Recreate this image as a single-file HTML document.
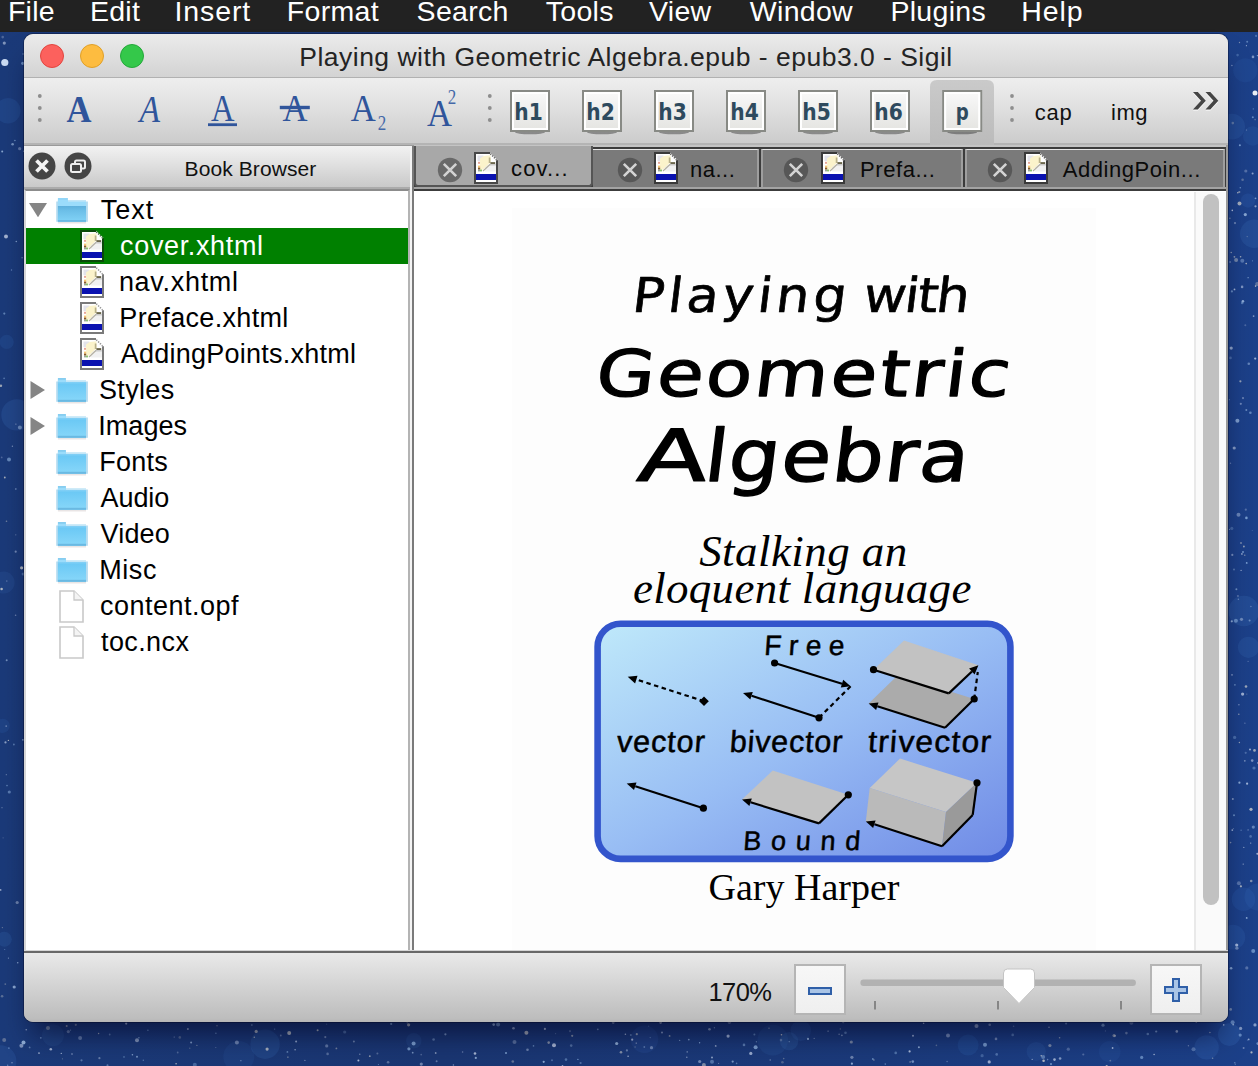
<!DOCTYPE html>
<html lang="en">
<head>
<meta charset="utf-8">
<title>Playing with Geometric Algebra.epub - epub3.0 - Sigil</title>
<style>
*{box-sizing:border-box;margin:0;padding:0}
html,body{width:1258px;height:1066px;overflow:hidden}
body{position:relative;background:#1a3a7c;font-family:"Liberation Sans",sans-serif;color:#000}
.abs{position:absolute}
#desk{position:absolute;left:0;top:0;width:1258px;height:1066px;background:linear-gradient(90deg,#1b3a79 0%,#1a3672 35%,#1b3a7b 70%,#1c4089 100%)}
#menubar{position:absolute;left:0;top:0;width:1258px;height:32px;background:#222222;color:#fff;font-size:28.5px;letter-spacing:.3px;line-height:32px;white-space:nowrap;overflow:hidden}
#menubar span{position:absolute;top:-5.5px;line-height:32px}
#win{position:absolute;left:24px;top:34px;width:1204px;height:988px;border-radius:9px 9px 9px 9px;background:#9a9a9a;overflow:hidden;box-shadow:0 0 0 1px rgba(0,0,20,.3),0 20px 28px -8px rgba(0,0,30,.6)}
#titlebar{position:absolute;left:0;top:0;width:1204px;height:44px;background:linear-gradient(#ebebeb,#d3d3d3);border-bottom:1px solid #b1b1b1}
#titlebar .t{position:absolute;left:0;width:1204px;top:7px;text-align:center;font-size:26.5px;letter-spacing:.49px;line-height:32px;color:#242424;white-space:nowrap}
.tl{position:absolute;top:10px;width:24px;height:24px;border-radius:12px}
#toolbar{position:absolute;left:0;top:44px;width:1204px;height:67px;background:linear-gradient(#eeeeee,#e2e2e2 40%,#cccccc);border-bottom:2px solid #b4b4b4}
.dot{position:absolute;width:4px;height:4px;border-radius:2px;background:#8c8c8c}
.ai{position:absolute;font-family:"Liberation Serif",serif;color:#2f549a;line-height:1;white-space:nowrap}
.hb{position:absolute;top:12px;width:40px;height:42px;border:2px solid #888a85;background:linear-gradient(#f8f8f8,#e6e6e3);box-shadow:inset 0 0 0 2px #fff,0 2px 2px -1px rgba(0,0,0,.55)}
.hb b{position:absolute;left:0;top:7px;width:36px;text-align:center;font-family:"DejaVu Sans","Liberation Sans",sans-serif;font-weight:bold;font-size:23px;line-height:24px;color:#2e4a5e;transform:scaleX(.86);letter-spacing:1px}

#bbhead{position:absolute;left:0;top:112px;width:386px;height:43px;background:linear-gradient(#f2f2f2,#e0e0e0 45%,#c9c9c9);border-bottom:2px solid #ababab}
#bbhead .t{position:absolute;left:0;top:7.5px;width:100%;padding-left:67px;text-align:center;font-size:21px;line-height:30px;letter-spacing:.1px;color:#111}
#tree{position:absolute;left:0;top:155px;width:386px;height:761px;background:#fff;border-left:2px solid #d6d6d6;border-right:2px solid #b4b4b4;border-top:2px solid #8c8c8c;font-size:27px;letter-spacing:.3px}
.row{position:absolute;left:0;width:382px;height:36px;line-height:36px;white-space:nowrap}
.row.sel{background:#008000;color:#fff}
.row span{position:absolute;top:0}
.row svg{position:absolute}
#split{position:absolute;left:386px;top:112px;width:4px;height:806px;background:linear-gradient(90deg,#f4f4f4 0,#f4f4f4 2px,#7a7a7a 2px)}
#tabbar{position:absolute;left:390px;top:111px;width:812px;height:47px;background:linear-gradient(#c4c4c4 0,#c4c4c4 2px,#3c3c3c 2px,#3c3c3c 46.5px,#fff 46.5px);font-size:22px;overflow:hidden}
.tab{position:absolute;top:3.7px;height:38.3px;background:#7a7a7a;border:2px solid #9e9e9e;border-top:1.5px solid #e6e6e6;border-bottom:0}
.tab.act{top:1px;height:41px;background:#a8a8a8;border:2px solid #555;border-top:0;border-radius:0 0 4px 4px}
#tabbar span{position:absolute;line-height:30px;color:#0a0a0a;white-space:nowrap}
#tabbar svg{position:absolute}
#content{position:absolute;left:390px;top:158px;width:812px;height:758px;background:#fff;overflow:hidden}
#cover{position:absolute;left:98px;top:16px;width:584px;height:742px;background:#fdfdfd}
#vsb{position:absolute;left:780px;top:0;width:32px;height:758px;background:#fafafa;border-left:2px solid #e9e9e9}
#vsb i{position:absolute;left:7px;top:2px;width:16px;height:711px;border-radius:8px;background:#c1c1c1}
#status{position:absolute;left:0;top:917px;width:1204px;height:71px;background:linear-gradient(#e9e9e9,#e0e0e0 20%,#bdbdbd 95%,#b6b6b6);border-top:2px solid #686868;box-shadow:0 -1px 0 #d6d6d6}
#status .z{position:absolute;left:684.5px;top:24px;font-size:25.5px;letter-spacing:-.6px;line-height:30px;color:#111}
.zb{position:absolute;top:11px;width:52px;height:51px;border:2px solid #b5b5b5;background:linear-gradient(#f7f7f7,#efefef)}
</style>
</head>
<body>
<div id="desk"><svg class="abs" style="left:0;top:0" width="1258" height="1066" viewBox="0 0 1258 1066"><circle cx="1243.8" cy="611.0" r="15.3" fill="#4a86d0" opacity="0.16"/><circle cx="1254.2" cy="233.7" r="14.2" fill="#4a86d0" opacity="0.16"/><circle cx="1252.6" cy="136.0" r="9.7" fill="#4a86d0" opacity="0.11"/><circle cx="1248.5" cy="647.3" r="10.6" fill="#4a86d0" opacity="0.15"/><circle cx="1248.0" cy="200.6" r="7.1" fill="#3f78c8" opacity="0.16"/><circle cx="1232.9" cy="937.2" r="12.4" fill="#3a6ec0" opacity="0.19"/><circle cx="1243.5" cy="899.3" r="11.7" fill="#3a6ec0" opacity="0.18"/><circle cx="1232.1" cy="126.7" r="12.9" fill="#4a86d0" opacity="0.15"/><circle cx="1257.9" cy="897.0" r="13.4" fill="#3f78c8" opacity="0.14"/><circle cx="1245.3" cy="70.3" r="12.1" fill="#3f78c8" opacity="0.11"/><circle cx="16.9" cy="414.9" r="15.6" fill="#3f78c8" opacity="0.20"/><circle cx="4.3" cy="939.2" r="7.5" fill="#4a86d0" opacity="0.15"/><circle cx="7.9" cy="110.8" r="12.7" fill="#3a6ec0" opacity="0.19"/><circle cx="6.7" cy="341.9" r="7.1" fill="#3f78c8" opacity="0.15"/><circle cx="2.7" cy="725.8" r="7.1" fill="#3a6ec0" opacity="0.16"/><circle cx="3.6" cy="582.5" r="11.0" fill="#4a86d0" opacity="0.12"/><circle cx="968.1" cy="1045.1" r="10.5" fill="#3f78c8" opacity="0.15"/><circle cx="0.6" cy="1061.1" r="15.8" fill="#3f78c8" opacity="0.17"/><circle cx="265.1" cy="1044.2" r="14.7" fill="#3f78c8" opacity="0.18"/><circle cx="53.0" cy="1035.3" r="11.0" fill="#4a86d0" opacity="0.10"/><circle cx="413.8" cy="1040.7" r="7.7" fill="#4a86d0" opacity="0.11"/><circle cx="800.8" cy="1030.6" r="10.3" fill="#3f78c8" opacity="0.17"/><circle cx="1206.6" cy="1047.4" r="12.2" fill="#3f78c8" opacity="0.20"/><circle cx="789.1" cy="1041.2" r="9.1" fill="#4a86d0" opacity="0.17"/><circle cx="238.8" cy="1056.6" r="15.5" fill="#3a6ec0" opacity="0.12"/><circle cx="1109.8" cy="1051.7" r="10.8" fill="#3f78c8" opacity="0.11"/><circle cx="644.5" cy="1039.2" r="13.7" fill="#3a6ec0" opacity="0.15"/><circle cx="1036.2" cy="1051.5" r="9.6" fill="#4a86d0" opacity="0.12"/><circle cx="1229.3" cy="1034.6" r="11.3" fill="#4a86d0" opacity="0.18"/><circle cx="772.8" cy="1040.1" r="15.3" fill="#3f78c8" opacity="0.12"/><circle cx="1.7" cy="457.4" r="0.9" fill="#cfdcf4" opacity="0.28"/><circle cx="6.8" cy="581.1" r="0.8" fill="#cfdcf4" opacity="0.30"/><circle cx="21.4" cy="1045.8" r="2.0" fill="#cfdcf4" opacity="0.54"/><circle cx="14.2" cy="987.0" r="1.6" fill="#b8d4f4" opacity="0.71"/><circle cx="23.1" cy="54.0" r="0.7" fill="#b8d4f4" opacity="0.49"/><circle cx="7.7" cy="1065.3" r="0.7" fill="#b8d4f4" opacity="0.48"/><circle cx="17.7" cy="962.8" r="0.8" fill="#b8d4f4" opacity="0.65"/><circle cx="8.4" cy="740.4" r="0.7" fill="#e8e4d8" opacity="0.69"/><circle cx="22.7" cy="63.3" r="1.6" fill="#9fc4ee" opacity="0.54"/><circle cx="15.9" cy="424.1" r="0.6" fill="#dfe8f8" opacity="0.55"/><circle cx="2.2" cy="151.5" r="1.0" fill="#b8d4f4" opacity="0.69"/><circle cx="9.3" cy="792.0" r="1.6" fill="#9fc4ee" opacity="0.47"/><circle cx="2.0" cy="807.7" r="0.6" fill="#dfe8f8" opacity="0.41"/><circle cx="11.5" cy="270.0" r="0.7" fill="#9fc4ee" opacity="0.50"/><circle cx="15.8" cy="534.8" r="0.6" fill="#cfdcf4" opacity="0.43"/><circle cx="16.3" cy="241.5" r="0.8" fill="#b8d4f4" opacity="0.63"/><circle cx="15.8" cy="489.0" r="0.9" fill="#b8d4f4" opacity="0.41"/><circle cx="4.8" cy="477.5" r="0.9" fill="#e8e4d8" opacity="0.69"/><circle cx="5.3" cy="984.1" r="0.9" fill="#e8e4d8" opacity="0.32"/><circle cx="8.4" cy="958.1" r="0.6" fill="#b8d4f4" opacity="0.61"/><circle cx="19.7" cy="148.7" r="1.6" fill="#cfdcf4" opacity="0.39"/><circle cx="19.9" cy="427.6" r="2.0" fill="#b8d4f4" opacity="0.50"/><circle cx="17.2" cy="902.5" r="1.6" fill="#dfe8f8" opacity="0.41"/><circle cx="6.7" cy="660.2" r="1.0" fill="#b8d4f4" opacity="0.54"/><circle cx="15.6" cy="615.2" r="0.8" fill="#cfdcf4" opacity="0.45"/><circle cx="0.6" cy="889.9" r="0.9" fill="#dfe8f8" opacity="0.64"/><circle cx="23.6" cy="151.2" r="0.7" fill="#b8d4f4" opacity="0.56"/><circle cx="23.0" cy="739.8" r="0.9" fill="#b8d4f4" opacity="0.66"/><circle cx="4.3" cy="43.1" r="1.6" fill="#dfe8f8" opacity="0.52"/><circle cx="4.3" cy="313.6" r="1.1" fill="#9fc4ee" opacity="0.52"/><circle cx="12.0" cy="1062.7" r="0.8" fill="#cfdcf4" opacity="0.45"/><circle cx="2.1" cy="996.3" r="1.3" fill="#e8e4d8" opacity="0.31"/><circle cx="4.7" cy="949.5" r="0.6" fill="#9fc4ee" opacity="0.44"/><circle cx="15.7" cy="551.7" r="1.1" fill="#cfdcf4" opacity="0.48"/><circle cx="2.4" cy="927.6" r="0.7" fill="#e8e4d8" opacity="0.36"/><circle cx="23.5" cy="1042.6" r="2.0" fill="#b8d4f4" opacity="0.74"/><circle cx="6.3" cy="774.7" r="0.6" fill="#dfe8f8" opacity="0.42"/><circle cx="0.9" cy="385.7" r="1.3" fill="#e8e4d8" opacity="0.63"/><circle cx="22.1" cy="257.7" r="0.7" fill="#dfe8f8" opacity="0.46"/><circle cx="4.1" cy="378.4" r="0.8" fill="#9fc4ee" opacity="0.49"/><circle cx="21.6" cy="567.8" r="1.6" fill="#e8e4d8" opacity="0.72"/><circle cx="13.9" cy="744.5" r="0.9" fill="#9fc4ee" opacity="0.47"/><circle cx="7.0" cy="785.6" r="0.8" fill="#9fc4ee" opacity="0.51"/><circle cx="6.2" cy="726.1" r="0.9" fill="#cfdcf4" opacity="0.40"/><circle cx="23.2" cy="574.0" r="1.6" fill="#9fc4ee" opacity="0.35"/><circle cx="2.7" cy="37.1" r="1.3" fill="#dfe8f8" opacity="0.26"/><circle cx="12.4" cy="446.2" r="0.7" fill="#cfdcf4" opacity="0.50"/><circle cx="1.6" cy="589.0" r="1.3" fill="#e8e4d8" opacity="0.71"/><circle cx="6.5" cy="521.2" r="0.8" fill="#e8e4d8" opacity="0.42"/><circle cx="12.6" cy="144.3" r="1.3" fill="#b8d4f4" opacity="0.56"/><circle cx="3.1" cy="837.8" r="0.6" fill="#cfdcf4" opacity="0.27"/><circle cx="5.5" cy="742.4" r="1.1" fill="#cfdcf4" opacity="0.61"/><circle cx="14.9" cy="140.5" r="0.7" fill="#9fc4ee" opacity="0.68"/><circle cx="6.0" cy="236.5" r="2.0" fill="#dfe8f8" opacity="0.69"/><circle cx="9.0" cy="459.5" r="2.0" fill="#9fc4ee" opacity="0.56"/><circle cx="1234.9" cy="684.8" r="0.9" fill="#9fc4ee" opacity="0.51"/><circle cx="1246.7" cy="917.9" r="0.9" fill="#b8d4f4" opacity="0.71"/><circle cx="1255.2" cy="358.6" r="1.1" fill="#cfdcf4" opacity="0.70"/><circle cx="1235.3" cy="1064.3" r="0.7" fill="#cfdcf4" opacity="0.32"/><circle cx="1232.8" cy="123.1" r="1.3" fill="#e8e4d8" opacity="0.30"/><circle cx="1244.8" cy="760.8" r="0.9" fill="#dfe8f8" opacity="0.45"/><circle cx="1231.8" cy="621.3" r="1.1" fill="#b8d4f4" opacity="0.71"/><circle cx="1232.3" cy="554.9" r="1.1" fill="#cfdcf4" opacity="0.50"/><circle cx="1252.3" cy="530.5" r="0.6" fill="#9fc4ee" opacity="0.27"/><circle cx="1246.8" cy="967.9" r="1.6" fill="#cfdcf4" opacity="0.32"/><circle cx="1232.3" cy="210.4" r="0.8" fill="#dfe8f8" opacity="0.75"/><circle cx="1245.8" cy="171.0" r="1.6" fill="#dfe8f8" opacity="0.29"/><circle cx="1238.5" cy="514.8" r="2.0" fill="#cfdcf4" opacity="0.43"/><circle cx="1246.4" cy="45.7" r="0.6" fill="#cfdcf4" opacity="0.67"/><circle cx="1240.8" cy="403.8" r="1.1" fill="#cfdcf4" opacity="0.45"/><circle cx="1246.5" cy="130.0" r="0.6" fill="#dfe8f8" opacity="0.41"/><circle cx="1252.2" cy="760.6" r="1.3" fill="#cfdcf4" opacity="0.53"/><circle cx="1243.6" cy="1048.1" r="1.0" fill="#dfe8f8" opacity="0.39"/><circle cx="1250.6" cy="836.4" r="1.3" fill="#b8d4f4" opacity="0.32"/><circle cx="1254.5" cy="750.4" r="1.3" fill="#e8e4d8" opacity="0.63"/><circle cx="1235.0" cy="223.1" r="1.1" fill="#dfe8f8" opacity="0.40"/><circle cx="1229.3" cy="399.7" r="0.6" fill="#b8d4f4" opacity="0.37"/><circle cx="1238.8" cy="714.2" r="0.8" fill="#e8e4d8" opacity="0.52"/><circle cx="1243.9" cy="546.5" r="0.9" fill="#e8e4d8" opacity="0.60"/><circle cx="1257.4" cy="55.6" r="0.7" fill="#b8d4f4" opacity="0.62"/><circle cx="1241.9" cy="553.9" r="0.9" fill="#dfe8f8" opacity="0.57"/><circle cx="1231.9" cy="291.4" r="1.1" fill="#9fc4ee" opacity="0.53"/><circle cx="1241.1" cy="570.4" r="0.7" fill="#dfe8f8" opacity="0.57"/><circle cx="1244.9" cy="723.2" r="0.6" fill="#cfdcf4" opacity="0.44"/><circle cx="1240.2" cy="1035.1" r="1.6" fill="#9fc4ee" opacity="0.52"/><circle cx="1230.7" cy="1009.4" r="1.3" fill="#e8e4d8" opacity="0.39"/><circle cx="1246.3" cy="410.0" r="1.0" fill="#b8d4f4" opacity="0.49"/><circle cx="1245.3" cy="325.2" r="1.0" fill="#cfdcf4" opacity="0.26"/><circle cx="1246.0" cy="686.5" r="1.3" fill="#e8e4d8" opacity="0.63"/><circle cx="1230.5" cy="357.9" r="1.3" fill="#b8d4f4" opacity="0.28"/><circle cx="1231.1" cy="968.3" r="1.3" fill="#b8d4f4" opacity="0.61"/><circle cx="1257.2" cy="284.0" r="2.0" fill="#e8e4d8" opacity="0.30"/><circle cx="1233.2" cy="1024.6" r="0.9" fill="#dfe8f8" opacity="0.55"/><circle cx="1230.5" cy="463.3" r="0.7" fill="#dfe8f8" opacity="0.35"/><circle cx="1239.3" cy="192.0" r="1.1" fill="#e8e4d8" opacity="0.47"/><circle cx="1242.2" cy="303.0" r="1.3" fill="#9fc4ee" opacity="0.43"/><circle cx="1252.6" cy="173.6" r="1.0" fill="#cfdcf4" opacity="0.62"/><circle cx="1243.0" cy="552.0" r="1.0" fill="#9fc4ee" opacity="0.64"/><circle cx="1253.6" cy="316.1" r="0.9" fill="#cfdcf4" opacity="0.57"/><circle cx="1234.5" cy="289.4" r="0.9" fill="#dfe8f8" opacity="0.69"/><circle cx="1247.2" cy="41.8" r="1.0" fill="#9fc4ee" opacity="0.46"/><circle cx="1230.1" cy="262.1" r="1.0" fill="#dfe8f8" opacity="0.29"/><circle cx="1255.5" cy="198.3" r="0.9" fill="#b8d4f4" opacity="0.57"/><circle cx="1243.0" cy="398.1" r="1.1" fill="#cfdcf4" opacity="0.42"/><circle cx="1253.3" cy="108.9" r="0.7" fill="#9fc4ee" opacity="0.47"/><circle cx="1253.3" cy="827.1" r="1.6" fill="#b8d4f4" opacity="0.46"/><circle cx="1240.3" cy="187.8" r="0.8" fill="#9fc4ee" opacity="0.58"/><circle cx="1238.4" cy="599.3" r="0.8" fill="#b8d4f4" opacity="0.46"/><circle cx="1245.8" cy="509.7" r="1.1" fill="#dfe8f8" opacity="0.29"/><circle cx="1241.5" cy="619.3" r="1.6" fill="#dfe8f8" opacity="0.40"/><circle cx="1231.2" cy="252.5" r="0.7" fill="#e8e4d8" opacity="0.60"/><circle cx="1250.0" cy="749.6" r="1.0" fill="#cfdcf4" opacity="0.69"/><circle cx="1239.4" cy="782.7" r="1.1" fill="#b8d4f4" opacity="0.70"/><circle cx="1249.6" cy="620.6" r="1.0" fill="#b8d4f4" opacity="0.47"/><circle cx="1242.3" cy="260.7" r="2.0" fill="#b8d4f4" opacity="0.37"/><circle cx="1253.0" cy="56.9" r="1.3" fill="#cfdcf4" opacity="0.54"/><circle cx="1250.4" cy="412.8" r="1.3" fill="#9fc4ee" opacity="0.52"/><circle cx="1245.3" cy="214.6" r="1.6" fill="#b8d4f4" opacity="0.69"/><circle cx="1252.5" cy="260.8" r="0.6" fill="#9fc4ee" opacity="0.52"/><circle cx="1237.6" cy="55.1" r="1.3" fill="#9fc4ee" opacity="0.28"/><circle cx="1237.9" cy="596.0" r="1.1" fill="#dfe8f8" opacity="0.29"/><circle cx="1255.1" cy="119.6" r="0.8" fill="#e8e4d8" opacity="0.30"/><circle cx="1236.1" cy="259.9" r="2.0" fill="#e8e4d8" opacity="0.42"/><circle cx="1240.4" cy="381.3" r="1.1" fill="#e8e4d8" opacity="0.59"/><circle cx="1243.2" cy="864.1" r="0.7" fill="#dfe8f8" opacity="0.60"/><circle cx="1240.9" cy="886.3" r="1.1" fill="#e8e4d8" opacity="0.68"/><circle cx="1253.2" cy="950.9" r="2.0" fill="#9fc4ee" opacity="0.57"/><circle cx="1239.5" cy="42.5" r="0.7" fill="#e8e4d8" opacity="0.46"/><circle cx="1255.6" cy="286.1" r="0.8" fill="#e8e4d8" opacity="0.75"/><circle cx="1248.8" cy="363.8" r="1.3" fill="#b8d4f4" opacity="0.46"/><circle cx="1236.9" cy="948.2" r="1.6" fill="#dfe8f8" opacity="0.40"/><circle cx="1237.8" cy="192.8" r="0.8" fill="#e8e4d8" opacity="0.71"/><circle cx="1229.5" cy="529.4" r="0.6" fill="#cfdcf4" opacity="0.41"/><circle cx="1234.4" cy="256.8" r="0.9" fill="#e8e4d8" opacity="0.55"/><circle cx="1246.2" cy="263.6" r="0.8" fill="#e8e4d8" opacity="0.70"/><circle cx="1234.0" cy="815.3" r="1.0" fill="#9fc4ee" opacity="0.56"/><circle cx="1242.9" cy="301.3" r="1.3" fill="#b8d4f4" opacity="0.71"/><circle cx="1248.1" cy="829.9" r="0.7" fill="#cfdcf4" opacity="0.49"/><circle cx="1240.6" cy="256.8" r="0.8" fill="#e8e4d8" opacity="0.65"/><circle cx="1257.3" cy="853.7" r="1.0" fill="#dfe8f8" opacity="0.64"/><circle cx="1248.1" cy="277.7" r="0.6" fill="#b8d4f4" opacity="0.69"/><circle cx="1242.1" cy="286.9" r="1.3" fill="#cfdcf4" opacity="0.55"/><circle cx="1241.1" cy="830.2" r="0.8" fill="#9fc4ee" opacity="0.38"/><circle cx="1232.8" cy="798.9" r="1.0" fill="#dfe8f8" opacity="0.51"/><circle cx="1233.4" cy="828.6" r="0.6" fill="#cfdcf4" opacity="0.35"/><circle cx="1252.8" cy="117.2" r="1.0" fill="#9fc4ee" opacity="0.56"/><circle cx="1231.8" cy="528.4" r="1.6" fill="#9fc4ee" opacity="0.29"/><circle cx="1244.8" cy="555.2" r="0.6" fill="#e8e4d8" opacity="0.64"/><circle cx="1234.6" cy="737.4" r="1.6" fill="#9fc4ee" opacity="0.35"/><circle cx="1241.0" cy="543.0" r="1.0" fill="#e8e4d8" opacity="0.41"/><circle cx="1231.2" cy="348.1" r="1.6" fill="#dfe8f8" opacity="0.58"/><circle cx="1239.4" cy="742.5" r="0.7" fill="#e8e4d8" opacity="0.58"/><circle cx="1250.7" cy="843.1" r="0.7" fill="#dfe8f8" opacity="0.58"/><circle cx="1254.0" cy="768.0" r="1.6" fill="#9fc4ee" opacity="0.37"/><circle cx="1232.3" cy="830.1" r="0.9" fill="#cfdcf4" opacity="0.70"/><circle cx="1237.4" cy="420.8" r="2.0" fill="#b8d4f4" opacity="0.62"/><circle cx="1250.9" cy="606.5" r="0.7" fill="#cfdcf4" opacity="0.38"/><circle cx="1239.9" cy="145.3" r="1.0" fill="#9fc4ee" opacity="0.72"/><circle cx="1242.6" cy="694.1" r="1.6" fill="#dfe8f8" opacity="0.66"/><circle cx="1232.0" cy="674.9" r="0.8" fill="#cfdcf4" opacity="0.59"/><circle cx="1234.2" cy="448.0" r="1.6" fill="#dfe8f8" opacity="0.55"/><circle cx="1231.9" cy="65.5" r="0.7" fill="#dfe8f8" opacity="0.47"/><circle cx="1238.9" cy="883.2" r="2.0" fill="#cfdcf4" opacity="0.32"/><circle cx="1251.2" cy="881.0" r="1.3" fill="#e8e4d8" opacity="0.49"/><circle cx="1247.1" cy="783.7" r="1.1" fill="#cfdcf4" opacity="0.74"/><circle cx="1248.1" cy="661.3" r="0.6" fill="#cfdcf4" opacity="0.38"/><circle cx="1238.9" cy="704.8" r="0.7" fill="#cfdcf4" opacity="0.53"/><circle cx="1243.8" cy="847.4" r="0.7" fill="#cfdcf4" opacity="0.56"/><circle cx="1236.4" cy="589.2" r="1.0" fill="#b8d4f4" opacity="0.52"/><circle cx="1246.7" cy="562.9" r="0.9" fill="#9fc4ee" opacity="0.74"/><circle cx="1258.0" cy="762.9" r="0.9" fill="#dfe8f8" opacity="0.53"/><circle cx="1247.2" cy="236.6" r="0.7" fill="#e8e4d8" opacity="0.32"/><circle cx="1245.7" cy="752.8" r="1.1" fill="#b8d4f4" opacity="0.30"/><circle cx="1236.7" cy="945.0" r="1.6" fill="#cfdcf4" opacity="0.74"/><circle cx="1235.9" cy="620.7" r="2.0" fill="#9fc4ee" opacity="0.53"/><circle cx="1255.5" cy="206.3" r="1.1" fill="#dfe8f8" opacity="0.55"/><circle cx="1256.1" cy="35.9" r="1.1" fill="#9fc4ee" opacity="0.37"/><circle cx="1239.5" cy="203.5" r="2.0" fill="#e8e4d8" opacity="0.66"/><circle cx="1229.9" cy="218.2" r="0.8" fill="#e8e4d8" opacity="0.40"/><circle cx="1246.8" cy="694.1" r="0.6" fill="#e8e4d8" opacity="0.33"/><circle cx="1242.6" cy="179.8" r="1.3" fill="#e8e4d8" opacity="0.31"/><circle cx="1234.0" cy="569.4" r="1.0" fill="#b8d4f4" opacity="0.37"/><circle cx="1230.6" cy="842.6" r="0.8" fill="#e8e4d8" opacity="0.45"/><circle cx="1246.4" cy="517.9" r="1.3" fill="#9fc4ee" opacity="0.70"/><circle cx="1251.0" cy="809.3" r="1.6" fill="#e8e4d8" opacity="0.69"/><circle cx="1054.5" cy="1059.6" r="1.3" fill="#dfe8f8" opacity="0.66"/><circle cx="712.0" cy="1061.8" r="2.0" fill="#9fc4ee" opacity="0.42"/><circle cx="543.7" cy="1061.8" r="1.1" fill="#b8d4f4" opacity="0.70"/><circle cx="912.8" cy="1061.6" r="1.3" fill="#b8d4f4" opacity="0.55"/><circle cx="1110.3" cy="1060.6" r="0.9" fill="#e8e4d8" opacity="0.31"/><circle cx="304.9" cy="1060.4" r="0.6" fill="#dfe8f8" opacity="0.49"/><circle cx="662.0" cy="1032.5" r="1.0" fill="#cfdcf4" opacity="0.58"/><circle cx="1106.7" cy="1066.0" r="1.1" fill="#e8e4d8" opacity="0.68"/><circle cx="709.5" cy="1029.2" r="1.3" fill="#dfe8f8" opacity="0.53"/><circle cx="124.0" cy="1056.9" r="0.7" fill="#9fc4ee" opacity="0.69"/><circle cx="1196.3" cy="1022.0" r="0.9" fill="#dfe8f8" opacity="0.61"/><circle cx="408.6" cy="1024.8" r="1.6" fill="#e8e4d8" opacity="0.66"/><circle cx="177.7" cy="1052.5" r="0.9" fill="#dfe8f8" opacity="0.27"/><circle cx="572.2" cy="1035.8" r="1.1" fill="#e8e4d8" opacity="0.50"/><circle cx="1105.4" cy="1030.9" r="0.6" fill="#b8d4f4" opacity="0.35"/><circle cx="1131.4" cy="1022.7" r="2.0" fill="#cfdcf4" opacity="0.35"/><circle cx="240.9" cy="1060.7" r="0.6" fill="#b8d4f4" opacity="0.58"/><circle cx="913.0" cy="1035.8" r="1.0" fill="#cfdcf4" opacity="0.68"/><circle cx="421.3" cy="1064.1" r="1.6" fill="#cfdcf4" opacity="0.46"/><circle cx="280.8" cy="1035.5" r="0.9" fill="#cfdcf4" opacity="0.38"/><circle cx="630.8" cy="1035.0" r="1.0" fill="#9fc4ee" opacity="0.44"/><circle cx="1112.6" cy="1048.0" r="0.9" fill="#cfdcf4" opacity="0.74"/><circle cx="839.1" cy="1034.2" r="0.7" fill="#dfe8f8" opacity="0.48"/><circle cx="554.0" cy="1045.2" r="2.0" fill="#dfe8f8" opacity="0.70"/><circle cx="754.4" cy="1034.5" r="1.0" fill="#9fc4ee" opacity="0.46"/><circle cx="109.7" cy="1034.5" r="0.9" fill="#b8d4f4" opacity="0.37"/><circle cx="923.6" cy="1023.3" r="0.8" fill="#dfe8f8" opacity="0.74"/><circle cx="782.4" cy="1062.3" r="1.3" fill="#e8e4d8" opacity="0.25"/><circle cx="75.8" cy="1024.8" r="1.1" fill="#e8e4d8" opacity="0.41"/><circle cx="985.0" cy="1044.7" r="2.0" fill="#9fc4ee" opacity="0.66"/><circle cx="936.4" cy="1045.4" r="0.8" fill="#e8e4d8" opacity="0.31"/><circle cx="296.1" cy="1041.4" r="1.0" fill="#cfdcf4" opacity="0.64"/><circle cx="326.7" cy="1045.9" r="1.6" fill="#cfdcf4" opacity="0.38"/><circle cx="750.8" cy="1053.4" r="1.6" fill="#cfdcf4" opacity="0.69"/><circle cx="408.9" cy="1048.8" r="1.6" fill="#9fc4ee" opacity="0.65"/><circle cx="555.6" cy="1033.6" r="0.6" fill="#cfdcf4" opacity="0.29"/><circle cx="715.7" cy="1045.9" r="0.9" fill="#dfe8f8" opacity="0.56"/><circle cx="391.2" cy="1023.9" r="1.1" fill="#9fc4ee" opacity="0.66"/><circle cx="982.1" cy="1055.7" r="1.6" fill="#9fc4ee" opacity="0.29"/><circle cx="215.9" cy="1033.2" r="0.8" fill="#9fc4ee" opacity="0.50"/><circle cx="989.7" cy="1024.7" r="1.3" fill="#cfdcf4" opacity="0.48"/><circle cx="885.3" cy="1064.1" r="0.8" fill="#9fc4ee" opacity="0.49"/><circle cx="1240.6" cy="1028.4" r="1.6" fill="#dfe8f8" opacity="0.51"/><circle cx="4.2" cy="1040.0" r="2.0" fill="#e8e4d8" opacity="0.32"/><circle cx="699.6" cy="1042.8" r="0.7" fill="#9fc4ee" opacity="0.74"/><circle cx="289.2" cy="1033.1" r="2.0" fill="#e8e4d8" opacity="0.68"/><circle cx="580.6" cy="1063.0" r="1.1" fill="#9fc4ee" opacity="0.40"/><circle cx="274.7" cy="1029.1" r="0.6" fill="#9fc4ee" opacity="0.62"/><circle cx="873.9" cy="1060.0" r="0.8" fill="#e8e4d8" opacity="0.48"/><circle cx="1176.8" cy="1031.4" r="1.3" fill="#cfdcf4" opacity="0.64"/><circle cx="526.4" cy="1032.8" r="2.0" fill="#e8e4d8" opacity="0.65"/><circle cx="256.2" cy="1031.4" r="1.6" fill="#e8e4d8" opacity="0.63"/><circle cx="562.5" cy="1065.7" r="0.8" fill="#cfdcf4" opacity="0.68"/><circle cx="679.7" cy="1040.4" r="0.6" fill="#b8d4f4" opacity="0.60"/><circle cx="1193.5" cy="1049.3" r="2.0" fill="#b8d4f4" opacity="0.34"/><circle cx="644.3" cy="1047.0" r="0.9" fill="#b8d4f4" opacity="0.38"/><circle cx="72.0" cy="1054.0" r="1.1" fill="#cfdcf4" opacity="0.32"/><circle cx="910.1" cy="1061.9" r="0.6" fill="#e8e4d8" opacity="0.75"/><circle cx="566.0" cy="1059.6" r="1.3" fill="#9fc4ee" opacity="0.41"/><circle cx="841.9" cy="1035.3" r="0.9" fill="#cfdcf4" opacity="0.49"/><circle cx="189.8" cy="1048.2" r="0.6" fill="#e8e4d8" opacity="0.35"/><circle cx="533.5" cy="1045.9" r="0.8" fill="#9fc4ee" opacity="0.51"/><circle cx="327.6" cy="1053.9" r="1.3" fill="#cfdcf4" opacity="0.32"/><circle cx="1049.9" cy="1045.5" r="1.6" fill="#e8e4d8" opacity="0.45"/><circle cx="650.2" cy="1037.6" r="0.7" fill="#b8d4f4" opacity="0.40"/><circle cx="769.0" cy="1028.2" r="0.6" fill="#e8e4d8" opacity="0.62"/><circle cx="712.0" cy="1057.6" r="1.0" fill="#dfe8f8" opacity="0.58"/><circle cx="1156.2" cy="1031.5" r="1.1" fill="#b8d4f4" opacity="0.58"/><circle cx="295.1" cy="1049.8" r="0.7" fill="#dfe8f8" opacity="0.65"/><circle cx="493.7" cy="1024.6" r="1.3" fill="#b8d4f4" opacity="0.72"/><circle cx="625.4" cy="1034.3" r="0.8" fill="#cfdcf4" opacity="0.71"/><circle cx="597.8" cy="1029.3" r="0.9" fill="#b8d4f4" opacity="0.51"/><circle cx="1141.7" cy="1057.4" r="1.6" fill="#9fc4ee" opacity="0.54"/><circle cx="388.1" cy="1062.2" r="1.3" fill="#dfe8f8" opacity="0.31"/><circle cx="1147.8" cy="1034.0" r="1.3" fill="#9fc4ee" opacity="0.50"/><circle cx="377.4" cy="1053.6" r="1.0" fill="#dfe8f8" opacity="0.29"/><circle cx="436.6" cy="1061.2" r="1.0" fill="#cfdcf4" opacity="0.38"/><circle cx="808.0" cy="1038.9" r="1.1" fill="#b8d4f4" opacity="0.73"/><circle cx="39.0" cy="1053.1" r="0.9" fill="#dfe8f8" opacity="0.64"/><circle cx="781.0" cy="1040.1" r="1.3" fill="#dfe8f8" opacity="0.28"/><circle cx="1043.6" cy="1060.7" r="1.3" fill="#e8e4d8" opacity="0.73"/><circle cx="48.0" cy="1028.0" r="2.0" fill="#e8e4d8" opacity="0.39"/><circle cx="453.4" cy="1065.0" r="0.8" fill="#b8d4f4" opacity="0.55"/><circle cx="287.4" cy="1051.9" r="0.9" fill="#9fc4ee" opacity="0.51"/><circle cx="1232.6" cy="1022.2" r="2.0" fill="#9fc4ee" opacity="0.50"/><circle cx="99.4" cy="1058.2" r="1.1" fill="#dfe8f8" opacity="0.38"/><circle cx="1115.0" cy="1035.8" r="0.9" fill="#cfdcf4" opacity="0.60"/><circle cx="1212.6" cy="1058.3" r="0.8" fill="#e8e4d8" opacity="0.42"/><circle cx="1012.7" cy="1034.9" r="1.3" fill="#9fc4ee" opacity="0.39"/><circle cx="626.9" cy="1050.4" r="1.1" fill="#cfdcf4" opacity="0.41"/><circle cx="1154.1" cy="1054.5" r="0.7" fill="#dfe8f8" opacity="0.74"/><circle cx="1114.1" cy="1035.6" r="1.6" fill="#e8e4d8" opacity="0.51"/><circle cx="50.8" cy="1049.3" r="1.3" fill="#dfe8f8" opacity="0.68"/><circle cx="433.6" cy="1039.5" r="1.3" fill="#b8d4f4" opacity="0.38"/><circle cx="462.6" cy="1052.0" r="0.8" fill="#cfdcf4" opacity="0.42"/><circle cx="1060.1" cy="1058.5" r="1.3" fill="#cfdcf4" opacity="0.57"/><circle cx="783.7" cy="1058.6" r="0.8" fill="#e8e4d8" opacity="0.31"/><circle cx="781.5" cy="1034.8" r="0.8" fill="#e8e4d8" opacity="0.74"/><circle cx="736.6" cy="1063.4" r="0.8" fill="#b8d4f4" opacity="0.38"/><circle cx="527.5" cy="1049.8" r="1.3" fill="#cfdcf4" opacity="0.44"/><circle cx="61.3" cy="1053.4" r="0.7" fill="#cfdcf4" opacity="0.69"/><circle cx="359.8" cy="1054.2" r="0.7" fill="#dfe8f8" opacity="0.45"/><circle cx="1047.6" cy="1059.6" r="0.8" fill="#b8d4f4" opacity="0.44"/><circle cx="552.0" cy="1060.3" r="1.0" fill="#9fc4ee" opacity="0.36"/><circle cx="513.5" cy="1028.2" r="1.3" fill="#cfdcf4" opacity="0.59"/><circle cx="686.8" cy="1057.2" r="0.8" fill="#dfe8f8" opacity="0.47"/><circle cx="699.7" cy="1061.5" r="1.6" fill="#cfdcf4" opacity="0.47"/><circle cx="407.2" cy="1022.8" r="0.8" fill="#e8e4d8" opacity="0.39"/><circle cx="344.7" cy="1032.0" r="1.6" fill="#9fc4ee" opacity="0.35"/><circle cx="326.6" cy="1024.3" r="0.7" fill="#b8d4f4" opacity="0.25"/><circle cx="843.2" cy="1022.2" r="1.1" fill="#cfdcf4" opacity="0.49"/><circle cx="1247.5" cy="1040.0" r="0.6" fill="#9fc4ee" opacity="0.46"/><circle cx="498.1" cy="1024.5" r="2.0" fill="#9fc4ee" opacity="0.56"/><circle cx="317.6" cy="1030.3" r="1.0" fill="#e8e4d8" opacity="0.68"/><circle cx="718.6" cy="1063.4" r="0.6" fill="#dfe8f8" opacity="0.34"/><circle cx="1188.4" cy="1045.7" r="0.7" fill="#dfe8f8" opacity="0.39"/><circle cx="948.0" cy="1035.6" r="2.0" fill="#cfdcf4" opacity="0.48"/><circle cx="80.1" cy="1038.0" r="2.0" fill="#cfdcf4" opacity="0.38"/><circle cx="996.7" cy="1054.4" r="1.3" fill="#9fc4ee" opacity="0.40"/><circle cx="1041.2" cy="1055.8" r="0.7" fill="#e8e4d8" opacity="0.72"/><circle cx="506.0" cy="1053.0" r="1.0" fill="#9fc4ee" opacity="0.70"/><circle cx="29.6" cy="1047.4" r="0.9" fill="#b8d4f4" opacity="0.41"/><circle cx="636.8" cy="1034.2" r="1.1" fill="#e8e4d8" opacity="0.56"/><circle cx="445.4" cy="1034.3" r="1.1" fill="#b8d4f4" opacity="0.55"/><circle cx="421.2" cy="1054.6" r="0.9" fill="#cfdcf4" opacity="0.27"/><circle cx="687.2" cy="1051.9" r="0.8" fill="#cfdcf4" opacity="0.42"/><circle cx="179.8" cy="1037.4" r="1.3" fill="#e8e4d8" opacity="0.26"/><circle cx="632.2" cy="1039.7" r="1.1" fill="#cfdcf4" opacity="0.73"/><circle cx="26.2" cy="1029.7" r="0.7" fill="#dfe8f8" opacity="0.63"/><circle cx="728.1" cy="1036.1" r="1.6" fill="#cfdcf4" opacity="0.73"/><circle cx="628.1" cy="1056.3" r="0.8" fill="#dfe8f8" opacity="0.66"/><circle cx="851.9" cy="1063.7" r="1.1" fill="#b8d4f4" opacity="0.69"/><circle cx="660.6" cy="1022.4" r="1.3" fill="#dfe8f8" opacity="0.71"/><circle cx="267.1" cy="1049.1" r="1.6" fill="#e8e4d8" opacity="0.68"/><circle cx="635.1" cy="1047.0" r="0.7" fill="#e8e4d8" opacity="0.31"/><circle cx="548.7" cy="1042.6" r="1.3" fill="#e8e4d8" opacity="0.50"/><circle cx="755.6" cy="1047.2" r="2.0" fill="#9fc4ee" opacity="0.71"/><circle cx="789.2" cy="1041.7" r="0.6" fill="#b8d4f4" opacity="0.55"/><circle cx="191.1" cy="1042.6" r="1.0" fill="#b8d4f4" opacity="0.62"/><circle cx="236.9" cy="1042.6" r="2.0" fill="#cfdcf4" opacity="0.45"/><circle cx="947.1" cy="1061.5" r="0.7" fill="#cfdcf4" opacity="0.37"/><circle cx="1043.2" cy="1057.1" r="2.0" fill="#b8d4f4" opacity="0.38"/><circle cx="81.5" cy="1060.3" r="1.1" fill="#b8d4f4" opacity="0.38"/><circle cx="571.2" cy="1045.6" r="1.3" fill="#b8d4f4" opacity="0.35"/><circle cx="1209.9" cy="1032.5" r="0.7" fill="#e8e4d8" opacity="0.53"/><circle cx="1103.0" cy="1025.2" r="1.6" fill="#9fc4ee" opacity="0.68"/><circle cx="1223.7" cy="1024.9" r="0.8" fill="#cfdcf4" opacity="0.66"/><circle cx="126.2" cy="1023.6" r="1.1" fill="#cfdcf4" opacity="0.73"/><circle cx="1049.0" cy="1027.2" r="0.8" fill="#dfe8f8" opacity="0.56"/><circle cx="1068.3" cy="1049.2" r="1.6" fill="#cfdcf4" opacity="0.29"/><circle cx="669.6" cy="1035.9" r="0.9" fill="#e8e4d8" opacity="0.53"/><circle cx="475.8" cy="1057.9" r="1.1" fill="#b8d4f4" opacity="0.67"/><circle cx="828.1" cy="1031.2" r="0.9" fill="#cfdcf4" opacity="0.34"/><circle cx="215.8" cy="1047.5" r="0.6" fill="#dfe8f8" opacity="0.31"/><circle cx="325.3" cy="1037.1" r="1.1" fill="#dfe8f8" opacity="0.40"/><circle cx="1251.5" cy="1052.4" r="1.1" fill="#e8e4d8" opacity="0.69"/><circle cx="251.8" cy="1025.1" r="1.0" fill="#9fc4ee" opacity="0.46"/><circle cx="514.5" cy="1042.1" r="2.0" fill="#dfe8f8" opacity="0.31"/><circle cx="435.7" cy="1053.0" r="0.9" fill="#dfe8f8" opacity="0.50"/><circle cx="358.4" cy="1060.4" r="1.0" fill="#dfe8f8" opacity="0.73"/><circle cx="851.3" cy="1042.0" r="1.6" fill="#e8e4d8" opacity="0.44"/><circle cx="756.4" cy="1041.7" r="0.7" fill="#b8d4f4" opacity="0.43"/><circle cx="353.9" cy="1041.4" r="1.0" fill="#dfe8f8" opacity="0.40"/><circle cx="845.5" cy="1032.8" r="1.3" fill="#9fc4ee" opacity="0.44"/><circle cx="1126.4" cy="1033.1" r="1.3" fill="#dfe8f8" opacity="0.39"/><circle cx="1032.2" cy="1059.4" r="0.7" fill="#dfe8f8" opacity="0.52"/><circle cx="570.0" cy="1031.2" r="1.1" fill="#dfe8f8" opacity="0.26"/><circle cx="909.6" cy="1051.4" r="1.1" fill="#dfe8f8" opacity="0.74"/><circle cx="840.3" cy="1028.9" r="0.7" fill="#e8e4d8" opacity="0.43"/><circle cx="636.2" cy="1043.1" r="0.6" fill="#dfe8f8" opacity="0.74"/><circle cx="1248.7" cy="1039.4" r="0.9" fill="#dfe8f8" opacity="0.57"/><circle cx="1255.0" cy="1024.9" r="1.6" fill="#cfdcf4" opacity="0.58"/><circle cx="651.5" cy="1047.7" r="1.6" fill="#cfdcf4" opacity="0.43"/><circle cx="648.6" cy="1026.2" r="0.7" fill="#9fc4ee" opacity="0.25"/><circle cx="989.2" cy="1061.9" r="1.6" fill="#dfe8f8" opacity="0.64"/><circle cx="544.9" cy="1028.9" r="1.1" fill="#dfe8f8" opacity="0.68"/><circle cx="137.0" cy="1040.2" r="2.0" fill="#dfe8f8" opacity="0.52"/><circle cx="976.5" cy="1026.1" r="2.0" fill="#dfe8f8" opacity="0.53"/><circle cx="714.4" cy="1027.7" r="0.7" fill="#b8d4f4" opacity="0.50"/><circle cx="369.8" cy="1056.2" r="0.9" fill="#e8e4d8" opacity="0.55"/><circle cx="68.3" cy="1031.6" r="1.6" fill="#dfe8f8" opacity="0.34"/><circle cx="577.9" cy="1059.4" r="0.7" fill="#9fc4ee" opacity="0.65"/><circle cx="194.8" cy="1064.7" r="2.0" fill="#9fc4ee" opacity="0.34"/><circle cx="770.2" cy="1060.0" r="0.7" fill="#dfe8f8" opacity="0.46"/><circle cx="287.9" cy="1057.1" r="0.7" fill="#e8e4d8" opacity="0.62"/><circle cx="196.9" cy="1045.4" r="0.6" fill="#e8e4d8" opacity="0.45"/><circle cx="378.4" cy="1064.5" r="0.6" fill="#b8d4f4" opacity="0.44"/><circle cx="98.6" cy="1033.5" r="0.7" fill="#e8e4d8" opacity="0.58"/><circle cx="413.6" cy="1043.5" r="2.0" fill="#9fc4ee" opacity="0.72"/><circle cx="1234.8" cy="1062.8" r="0.7" fill="#b8d4f4" opacity="0.45"/><circle cx="336.4" cy="1048.4" r="0.9" fill="#e8e4d8" opacity="0.43"/><circle cx="996.0" cy="1038.9" r="1.3" fill="#dfe8f8" opacity="0.42"/><circle cx="62.4" cy="1058.8" r="0.6" fill="#e8e4d8" opacity="0.33"/><circle cx="688.8" cy="1039.6" r="0.9" fill="#b8d4f4" opacity="0.59"/><circle cx="40.8" cy="1037.8" r="0.9" fill="#9fc4ee" opacity="0.51"/><circle cx="613.2" cy="1022.4" r="1.3" fill="#dfe8f8" opacity="0.55"/><circle cx="8.9" cy="1048.1" r="0.9" fill="#9fc4ee" opacity="0.43"/><circle cx="872.8" cy="1059.0" r="0.9" fill="#9fc4ee" opacity="0.55"/><circle cx="70.5" cy="1030.1" r="0.7" fill="#b8d4f4" opacity="0.51"/><circle cx="66.7" cy="1026.1" r="1.0" fill="#e8e4d8" opacity="0.54"/><circle cx="814.2" cy="1038.4" r="0.7" fill="#dfe8f8" opacity="0.39"/><circle cx="107.5" cy="1065.3" r="1.0" fill="#b8d4f4" opacity="0.41"/><circle cx="187.9" cy="1028.9" r="1.0" fill="#dfe8f8" opacity="0.57"/><circle cx="1257.7" cy="1043.6" r="1.3" fill="#9fc4ee" opacity="0.56"/><circle cx="174.2" cy="1037.0" r="0.6" fill="#cfdcf4" opacity="0.56"/><circle cx="729.4" cy="1022.2" r="1.6" fill="#dfe8f8" opacity="0.46"/><circle cx="217.0" cy="1025.7" r="0.8" fill="#e8e4d8" opacity="0.44"/><circle cx="851.9" cy="1057.3" r="1.6" fill="#dfe8f8" opacity="0.41"/><circle cx="1051.0" cy="1064.1" r="1.1" fill="#9fc4ee" opacity="0.58"/><circle cx="895.7" cy="1052.9" r="1.3" fill="#9fc4ee" opacity="0.41"/><circle cx="143.3" cy="1060.2" r="0.7" fill="#9fc4ee" opacity="0.46"/><circle cx="176.1" cy="1063.7" r="0.8" fill="#e8e4d8" opacity="0.69"/><circle cx="512.8" cy="1061.5" r="1.3" fill="#e8e4d8" opacity="0.35"/><circle cx="621.0" cy="1052.3" r="1.3" fill="#e8e4d8" opacity="0.51"/><circle cx="132.4" cy="1054.7" r="0.8" fill="#b8d4f4" opacity="0.64"/><circle cx="254.3" cy="1037.2" r="0.8" fill="#e8e4d8" opacity="0.58"/><circle cx="744.0" cy="1044.9" r="1.3" fill="#9fc4ee" opacity="0.48"/><circle cx="1059.6" cy="1037.8" r="0.8" fill="#e8e4d8" opacity="0.49"/><circle cx="412.7" cy="1052.7" r="0.9" fill="#b8d4f4" opacity="0.57"/><circle cx="918.9" cy="1047.3" r="1.0" fill="#b8d4f4" opacity="0.71"/><circle cx="475.0" cy="1053.5" r="1.3" fill="#dfe8f8" opacity="0.70"/><circle cx="703.9" cy="1064.9" r="2.0" fill="#e8e4d8" opacity="0.48"/><circle cx="147.9" cy="1030.2" r="0.7" fill="#9fc4ee" opacity="0.59"/><circle cx="1066.1" cy="1023.5" r="1.1" fill="#9fc4ee" opacity="0.53"/><circle cx="616.7" cy="1043.5" r="1.6" fill="#b8d4f4" opacity="0.73"/><circle cx="1013.6" cy="1026.3" r="0.8" fill="#cfdcf4" opacity="0.36"/><circle cx="1083.3" cy="1054.5" r="1.1" fill="#cfdcf4" opacity="0.31"/><circle cx="732.7" cy="1061.6" r="1.1" fill="#b8d4f4" opacity="0.59"/><circle cx="137.0" cy="1056.7" r="1.0" fill="#b8d4f4" opacity="0.55"/><circle cx="138.9" cy="1037.8" r="0.8" fill="#b8d4f4" opacity="0.52"/><circle cx="4.800" cy="62.500" r="3.600" fill="#d4e4fa" opacity=".95"/><circle cx="1255" cy="93" r="2.500" fill="#fff" opacity=".9"/></svg></div>
<div id="menubar">
<span style="left:7.9px">File</span><span style="left:89.9px">Edit</span><span style="left:174.5px;letter-spacing:.9px">Insert</span><span style="left:286.8px">Format</span><span style="left:416.6px">Search</span><span style="left:545.7px">Tools</span><span style="left:649px">View</span><span style="left:749.8px">Window</span><span style="left:890.4px">Plugins</span><span style="left:1021.2px;letter-spacing:.95px">Help</span>
</div>
<div id="win">
 <div id="titlebar">
  <div class="tl" style="left:16px;background:#fc615d;border:1px solid #e2453f"></div>
  <div class="tl" style="left:56px;background:#fdbc40;border:1px solid #e0a028"></div>
  <div class="tl" style="left:96px;background:#34c84a;border:1px solid #24a83a"></div>
  <div class="t">Playing with Geometric Algebra.epub - epub3.0 - Sigil</div>
 </div>
 <div id="toolbar">
<svg class="abs" style="left:0;top:0" width="1204" height="67" viewBox="0 0 1204 67">
<defs><linearGradient id="hbg" x1="0" y1="0" x2="0" y2="1"><stop offset="0" stop-color="#f9f9f9"/><stop offset="1" stop-color="#e4e4e1"/></linearGradient><linearGradient id="pbg" x1="0" y1="0" x2="0" y2="1"><stop offset="0" stop-color="#cacaca"/><stop offset="1" stop-color="#bbbbbb"/></linearGradient><radialGradient id="hsh" cx=".5" cy="0" r=".5" gradientTransform="matrix(1 0 0 1 0 0)"><stop offset="0" stop-color="#000" stop-opacity=".55"/><stop offset="1" stop-color="#000" stop-opacity="0"/></radialGradient></defs>
<path d="M906 67V9q0-7 7-7h50q7 0 7 7v58z" fill="url(#pbg)"/>
<circle cx="15.799999999999997" cy="18" r="1.900" fill="#8e8e8e"/><circle cx="15.799999999999997" cy="30" r="1.900" fill="#8e8e8e"/><circle cx="15.799999999999997" cy="42" r="1.900" fill="#8e8e8e"/>
<circle cx="465.8" cy="18" r="1.900" fill="#8e8e8e"/><circle cx="465.8" cy="30" r="1.900" fill="#8e8e8e"/><circle cx="465.8" cy="42" r="1.900" fill="#8e8e8e"/>
<circle cx="988" cy="18" r="1.900" fill="#8e8e8e"/><circle cx="988" cy="30" r="1.900" fill="#8e8e8e"/><circle cx="988" cy="42" r="1.900" fill="#8e8e8e"/>
<text x="42.5" y="44" font-family="Liberation Serif,serif" font-weight="bold" font-size="37" fill="#30559b" textLength="25" lengthAdjust="spacingAndGlyphs">A</text>
<text x="115.500" y="44" font-family="Liberation Serif,serif" font-style="italic" font-size="37" fill="#30559b" textLength="20.500" lengthAdjust="spacingAndGlyphs">A</text>
<text x="187" y="43" font-family="Liberation Serif,serif" font-size="37" fill="#30559b" textLength="23.500" lengthAdjust="spacingAndGlyphs">A</text>
<rect x="184" y="45.300" width="29" height="2.800" fill="#30559b"/>
<text x="258.400" y="43" font-family="Liberation Serif,serif" font-size="37" fill="#30559b" textLength="25" lengthAdjust="spacingAndGlyphs">A</text>
<rect x="255.800" y="27.800" width="30" height="3.400" fill="#30559b"/>
<text x="326.800" y="43" font-family="Liberation Serif,serif" font-size="37" fill="#30559b" textLength="25" lengthAdjust="spacingAndGlyphs">A</text>
<text x="353.800" y="51.800" font-family="Liberation Serif,serif" font-size="20.500" fill="#4468a8" textLength="8.500" lengthAdjust="spacingAndGlyphs">2</text>
<text x="403" y="48" font-family="Liberation Serif,serif" font-size="37" fill="#30559b" textLength="25" lengthAdjust="spacingAndGlyphs">A</text>
<text x="423.800" y="25.600" font-family="Liberation Serif,serif" font-size="20.500" fill="#4468a8" textLength="8.500" lengthAdjust="spacingAndGlyphs">2</text>
<ellipse cx="506" cy="54" rx="15" ry="2.300" fill="#000" opacity=".34"/>
<rect x="487" y="13" width="38" height="40" fill="url(#hbg)" stroke="#888a85" stroke-width="2"/>
<rect x="489" y="15" width="34" height="36" fill="none" stroke="#fff" stroke-width="2"/>
<text x="490.3" y="41.5" font-family="DejaVu Sans,sans-serif" font-weight="bold" font-size="23.5" fill="#2e4a5e" textLength="28.500" lengthAdjust="spacingAndGlyphs">h1</text>
<ellipse cx="578" cy="54" rx="15" ry="2.300" fill="#000" opacity=".34"/>
<rect x="559" y="13" width="38" height="40" fill="url(#hbg)" stroke="#888a85" stroke-width="2"/>
<rect x="561" y="15" width="34" height="36" fill="none" stroke="#fff" stroke-width="2"/>
<text x="562.3" y="41.5" font-family="DejaVu Sans,sans-serif" font-weight="bold" font-size="23.5" fill="#2e4a5e" textLength="28.500" lengthAdjust="spacingAndGlyphs">h2</text>
<ellipse cx="650" cy="54" rx="15" ry="2.300" fill="#000" opacity=".34"/>
<rect x="631" y="13" width="38" height="40" fill="url(#hbg)" stroke="#888a85" stroke-width="2"/>
<rect x="633" y="15" width="34" height="36" fill="none" stroke="#fff" stroke-width="2"/>
<text x="634.3" y="41.5" font-family="DejaVu Sans,sans-serif" font-weight="bold" font-size="23.5" fill="#2e4a5e" textLength="28.500" lengthAdjust="spacingAndGlyphs">h3</text>
<ellipse cx="722" cy="54" rx="15" ry="2.300" fill="#000" opacity=".34"/>
<rect x="703" y="13" width="38" height="40" fill="url(#hbg)" stroke="#888a85" stroke-width="2"/>
<rect x="705" y="15" width="34" height="36" fill="none" stroke="#fff" stroke-width="2"/>
<text x="706.3" y="41.5" font-family="DejaVu Sans,sans-serif" font-weight="bold" font-size="23.5" fill="#2e4a5e" textLength="28.500" lengthAdjust="spacingAndGlyphs">h4</text>
<ellipse cx="794" cy="54" rx="15" ry="2.300" fill="#000" opacity=".34"/>
<rect x="775" y="13" width="38" height="40" fill="url(#hbg)" stroke="#888a85" stroke-width="2"/>
<rect x="777" y="15" width="34" height="36" fill="none" stroke="#fff" stroke-width="2"/>
<text x="778.3" y="41.5" font-family="DejaVu Sans,sans-serif" font-weight="bold" font-size="23.5" fill="#2e4a5e" textLength="28.500" lengthAdjust="spacingAndGlyphs">h5</text>
<ellipse cx="866" cy="54" rx="15" ry="2.300" fill="#000" opacity=".34"/>
<rect x="847" y="13" width="38" height="40" fill="url(#hbg)" stroke="#888a85" stroke-width="2"/>
<rect x="849" y="15" width="34" height="36" fill="none" stroke="#fff" stroke-width="2"/>
<text x="850.3" y="41.5" font-family="DejaVu Sans,sans-serif" font-weight="bold" font-size="23.5" fill="#2e4a5e" textLength="28.500" lengthAdjust="spacingAndGlyphs">h6</text>
<ellipse cx="938.2" cy="54" rx="15" ry="2.300" fill="#000" opacity=".34"/>
<rect x="919.2" y="13" width="38" height="40" fill="url(#hbg)" stroke="#888a85" stroke-width="2"/>
<rect x="921.2" y="15" width="34" height="36" fill="none" stroke="#fff" stroke-width="2"/>
<text x="938.2" y="41.5" text-anchor="middle" font-family="DejaVu Sans,sans-serif" font-weight="bold" font-size="23" fill="#2e4a5e" textLength="13" lengthAdjust="spacingAndGlyphs">p</text>
<text x="1010.800" y="42.200" font-family="Liberation Sans,sans-serif" font-size="22" fill="#111" textLength="37" lengthAdjust="spacing">cap</text>
<text x="1087" y="42.200" font-family="Liberation Sans,sans-serif" font-size="22" fill="#111" textLength="36.500" lengthAdjust="spacing">img</text>
<path d="M1169 15.200h4.800l8 8.800-8 8.800h-4.800l8-8.800zM1181.500 15.200h4.800l8 8.800-8 8.800h-4.800l8-8.800z" fill="#fff" opacity=".7"/><path d="M1169 14h4.800l8 8.800-8 8.800h-4.800l8-8.800zM1181.500 14h4.800l8 8.800-8 8.800h-4.800l8-8.800z" fill="#454545"/>
</svg>
 </div>
<div id="bbhead"><svg width="28" height="28" viewBox="0 0 28 28" class="abs" style="left:4px;top:6px"><circle cx="14" cy="14" r="13.500" fill="#454545"/><path d="M8.500 8.500l11 11M19.500 8.500l-11 11" stroke="#f4f4f4" stroke-width="3.800"/></svg><svg width="28" height="28" viewBox="0 0 28 28" class="abs" style="left:40px;top:6px"><circle cx="14" cy="14" r="13.500" fill="#454545"/><rect x="11" y="8.500" width="10" height="8" rx="1.500" fill="none" stroke="#eee" stroke-width="2"/><rect x="7" y="12" width="10" height="8" rx="1.500" fill="#454545" stroke="#eee" stroke-width="2"/></svg><div class="t">Book Browser</div></div><svg width="0" height="0" style="position:absolute"><defs><linearGradient id="fg" x1="0" y1="0" x2="0" y2="1"><stop offset="0" stop-color="#84d0f6"/><stop offset=".12" stop-color="#6cc9f5"/><stop offset="1" stop-color="#88d7f9"/></linearGradient></defs></svg><div id="tree"><div class="row" style="top:1px"><svg width="20" height="16" viewBox="0 0 20 16" style="left:2px;top:10px"><path d="M1 1h18l-9 14.200z" fill="#858585"/></svg><svg width="34" height="28" viewBox="0 0 34 28" style="left:30px;top:5px"><defs><linearGradient id="fo" x1="0" y1="0" x2="0" y2="1"><stop offset="0" stop-color="#5fb0dc"/><stop offset=".3" stop-color="#6cbfe8"/><stop offset="1" stop-color="#82d3f7"/></linearGradient></defs><rect x=".2" y="4.500" width="31.700" height="20.300" fill="#b4dbf0"/><rect x="1.900" y="1" width="10" height="4.500" fill="#93d6f8"/><rect x="1.900" y="3" width="28.100" height="6.500" fill="#9cdcfb"/><rect x="12" y="3" width="18" height="1.600" fill="#c4e6f7"/><rect x="1.900" y="9" width="28.100" height="15.800" fill="url(#fo)"/><rect x="1.900" y="23" width="28.100" height="1.800" fill="#6ab9e2"/><rect x="1.900" y="25" width="28.100" height="1.500" fill="#e9e5e5"/></svg><span style="left:74.80px;letter-spacing:1.02px">Text</span></div><div class="row sel" style="top:37px"><svg width="24" height="32" viewBox="0 0 24 32" style="left:54px;top:2px"><path d="M1 1h15.500l6.500 6.500v23.500H1z" fill="#fff"/><rect x="11" y="13" width="11" height="6.500" fill="#f1f1f1"/><rect x="3.500" y="3.500" width="6" height="5.500" fill="#e3e3ea"/><path d="M6 6.500L9.500 4L16.400 3.200L16.600 10.500L13 13.500L9.500 17L6.200 18.800z" fill="#fbf3cb"/><path d="M15.600 5.500v5.500" stroke="#b9b18a" stroke-width="1.700"/><path d="M16.200 12.200L9 19" stroke="#b4b0a0" stroke-width="1.200"/><rect x="16.400" y="10.200" width="4.800" height="1.700" fill="#5a5638"/><rect x="15" y="12.300" width="6.800" height="1" fill="#b4b4b4"/><rect x="4" y="9.800" width="2" height="2" fill="#e8a898"/><rect x="4" y="13.600" width="2.200" height="2" fill="#f8c870"/><rect x="4" y="15.600" width="2.200" height="2" fill="#8b5a2b"/><rect x="4" y="17.600" width="2" height="1.800" fill="#9aa898"/><rect x="6" y="17.600" width="2" height="1.800" fill="#8cc070"/><rect x="2" y="22" width="20" height="6" fill="#0a12b0"/><path d="M16 1H1V31H23V8.300" fill="none" stroke="#0a4a0a" stroke-width="2"/><path d="M16.300 1.700L22.500 7.900" stroke="#0a4a0a" stroke-width="1.600" stroke-dasharray="1.300 1.300" opacity=".8"/></svg><span style="left:94.10px;letter-spacing:0.64px">cover.xhtml</span></div><div class="row" style="top:73px"><svg width="24" height="32" viewBox="0 0 24 32" style="left:54px;top:2px"><path d="M1 1h15.500l6.500 6.500v23.500H1z" fill="#fff"/><rect x="11" y="13" width="11" height="6.500" fill="#f1f1f1"/><rect x="3.500" y="3.500" width="6" height="5.500" fill="#e3e3ea"/><path d="M6 6.500L9.500 4L16.400 3.200L16.600 10.500L13 13.500L9.500 17L6.200 18.800z" fill="#fbf3cb"/><path d="M15.600 5.500v5.500" stroke="#b9b18a" stroke-width="1.700"/><path d="M16.200 12.200L9 19" stroke="#b4b0a0" stroke-width="1.200"/><rect x="16.400" y="10.200" width="4.800" height="1.700" fill="#5a5638"/><rect x="15" y="12.300" width="6.800" height="1" fill="#b4b4b4"/><rect x="4" y="9.800" width="2" height="2" fill="#e8a898"/><rect x="4" y="13.600" width="2.200" height="2" fill="#f8c870"/><rect x="4" y="15.600" width="2.200" height="2" fill="#8b5a2b"/><rect x="4" y="17.600" width="2" height="1.800" fill="#9aa898"/><rect x="6" y="17.600" width="2" height="1.800" fill="#8cc070"/><rect x="2" y="22" width="20" height="6" fill="#0a12b0"/><path d="M16 1H1V31H23V8.300" fill="none" stroke="#7a7a7a" stroke-width="2"/><path d="M16.300 1.700L22.500 7.900" stroke="#7a7a7a" stroke-width="1.600" stroke-dasharray="1.300 1.300" opacity=".8"/></svg><span style="left:92.90px;letter-spacing:0.70px">nav.xhtml</span></div><div class="row" style="top:109px"><svg width="24" height="32" viewBox="0 0 24 32" style="left:54px;top:2px"><path d="M1 1h15.500l6.500 6.500v23.500H1z" fill="#fff"/><rect x="11" y="13" width="11" height="6.500" fill="#f1f1f1"/><rect x="3.500" y="3.500" width="6" height="5.500" fill="#e3e3ea"/><path d="M6 6.500L9.500 4L16.400 3.200L16.600 10.500L13 13.500L9.500 17L6.200 18.800z" fill="#fbf3cb"/><path d="M15.600 5.500v5.500" stroke="#b9b18a" stroke-width="1.700"/><path d="M16.200 12.200L9 19" stroke="#b4b0a0" stroke-width="1.200"/><rect x="16.400" y="10.200" width="4.800" height="1.700" fill="#5a5638"/><rect x="15" y="12.300" width="6.800" height="1" fill="#b4b4b4"/><rect x="4" y="9.800" width="2" height="2" fill="#e8a898"/><rect x="4" y="13.600" width="2.200" height="2" fill="#f8c870"/><rect x="4" y="15.600" width="2.200" height="2" fill="#8b5a2b"/><rect x="4" y="17.600" width="2" height="1.800" fill="#9aa898"/><rect x="6" y="17.600" width="2" height="1.800" fill="#8cc070"/><rect x="2" y="22" width="20" height="6" fill="#0a12b0"/><path d="M16 1H1V31H23V8.300" fill="none" stroke="#7a7a7a" stroke-width="2"/><path d="M16.300 1.700L22.500 7.900" stroke="#7a7a7a" stroke-width="1.600" stroke-dasharray="1.300 1.300" opacity=".8"/></svg><span style="left:93.30px;letter-spacing:0.33px">Preface.xhtml</span></div><div class="row" style="top:145px"><svg width="24" height="32" viewBox="0 0 24 32" style="left:54px;top:2px"><path d="M1 1h15.500l6.500 6.500v23.500H1z" fill="#fff"/><rect x="11" y="13" width="11" height="6.500" fill="#f1f1f1"/><rect x="3.500" y="3.500" width="6" height="5.500" fill="#e3e3ea"/><path d="M6 6.500L9.500 4L16.400 3.200L16.600 10.500L13 13.500L9.500 17L6.200 18.800z" fill="#fbf3cb"/><path d="M15.600 5.500v5.500" stroke="#b9b18a" stroke-width="1.700"/><path d="M16.200 12.200L9 19" stroke="#b4b0a0" stroke-width="1.200"/><rect x="16.400" y="10.200" width="4.800" height="1.700" fill="#5a5638"/><rect x="15" y="12.300" width="6.800" height="1" fill="#b4b4b4"/><rect x="4" y="9.800" width="2" height="2" fill="#e8a898"/><rect x="4" y="13.600" width="2.200" height="2" fill="#f8c870"/><rect x="4" y="15.600" width="2.200" height="2" fill="#8b5a2b"/><rect x="4" y="17.600" width="2" height="1.800" fill="#9aa898"/><rect x="6" y="17.600" width="2" height="1.800" fill="#8cc070"/><rect x="2" y="22" width="20" height="6" fill="#0a12b0"/><path d="M16 1H1V31H23V8.300" fill="none" stroke="#7a7a7a" stroke-width="2"/><path d="M16.300 1.700L22.500 7.900" stroke="#7a7a7a" stroke-width="1.600" stroke-dasharray="1.300 1.300" opacity=".8"/></svg><span style="left:94.70px;letter-spacing:0.24px">AddingPoints.xhtml</span></div><div class="row" style="top:181px"><svg width="16" height="20" viewBox="0 0 16 20" style="left:4.400px;top:8px"><path d="M0.500 1v18l14.500-9z" fill="#858585"/></svg><svg width="34" height="28" viewBox="0 0 34 28" style="left:30px;top:5px"><rect x=".2" y="4.500" width="31.700" height="20.300" fill="#b4dbf0"/><rect x="1.900" y="1" width="8" height="4.500" fill="#86cdf0"/><rect x="1.900" y="2.800" width="8" height="2.500" fill="#9bdcfb"/><rect x="10" y="3.200" width="20" height="2" fill="#c4e6f7"/><rect x="1.900" y="5" width="28.100" height="19.800" fill="url(#fg)"/><rect x="1.900" y="22.800" width="28.100" height="2" fill="#6ab9e2"/><rect x="1.900" y="25" width="28.100" height="1.500" fill="#e9e5e5"/></svg><span style="left:73.00px;letter-spacing:0.34px">Styles</span></div><div class="row" style="top:217px"><svg width="16" height="20" viewBox="0 0 16 20" style="left:4.400px;top:8px"><path d="M0.500 1v18l14.500-9z" fill="#858585"/></svg><svg width="34" height="28" viewBox="0 0 34 28" style="left:30px;top:5px"><rect x=".2" y="4.500" width="31.700" height="20.300" fill="#b4dbf0"/><rect x="1.900" y="1" width="8" height="4.500" fill="#86cdf0"/><rect x="1.900" y="2.800" width="8" height="2.500" fill="#9bdcfb"/><rect x="10" y="3.200" width="20" height="2" fill="#c4e6f7"/><rect x="1.900" y="5" width="28.100" height="19.800" fill="url(#fg)"/><rect x="1.900" y="22.800" width="28.100" height="2" fill="#6ab9e2"/><rect x="1.900" y="25" width="28.100" height="1.500" fill="#e9e5e5"/></svg><span style="left:72.20px;letter-spacing:0.06px">Images</span></div><div class="row" style="top:253px"><svg width="34" height="28" viewBox="0 0 34 28" style="left:30px;top:5px"><rect x=".2" y="4.500" width="31.700" height="20.300" fill="#b4dbf0"/><rect x="1.900" y="1" width="8" height="4.500" fill="#86cdf0"/><rect x="1.900" y="2.800" width="8" height="2.500" fill="#9bdcfb"/><rect x="10" y="3.200" width="20" height="2" fill="#c4e6f7"/><rect x="1.900" y="5" width="28.100" height="19.800" fill="url(#fg)"/><rect x="1.900" y="22.800" width="28.100" height="2" fill="#6ab9e2"/><rect x="1.900" y="25" width="28.100" height="1.500" fill="#e9e5e5"/></svg><span style="left:73.20px;letter-spacing:0.27px">Fonts</span></div><div class="row" style="top:289px"><svg width="34" height="28" viewBox="0 0 34 28" style="left:30px;top:5px"><rect x=".2" y="4.500" width="31.700" height="20.300" fill="#b4dbf0"/><rect x="1.900" y="1" width="8" height="4.500" fill="#86cdf0"/><rect x="1.900" y="2.800" width="8" height="2.500" fill="#9bdcfb"/><rect x="10" y="3.200" width="20" height="2" fill="#c4e6f7"/><rect x="1.900" y="5" width="28.100" height="19.800" fill="url(#fg)"/><rect x="1.900" y="22.800" width="28.100" height="2" fill="#6ab9e2"/><rect x="1.900" y="25" width="28.100" height="1.500" fill="#e9e5e5"/></svg><span style="left:74.60px;letter-spacing:-0.10px">Audio</span></div><div class="row" style="top:325px"><svg width="34" height="28" viewBox="0 0 34 28" style="left:30px;top:5px"><rect x=".2" y="4.500" width="31.700" height="20.300" fill="#b4dbf0"/><rect x="1.900" y="1" width="8" height="4.500" fill="#86cdf0"/><rect x="1.900" y="2.800" width="8" height="2.500" fill="#9bdcfb"/><rect x="10" y="3.200" width="20" height="2" fill="#c4e6f7"/><rect x="1.900" y="5" width="28.100" height="19.800" fill="url(#fg)"/><rect x="1.900" y="22.800" width="28.100" height="2" fill="#6ab9e2"/><rect x="1.900" y="25" width="28.100" height="1.500" fill="#e9e5e5"/></svg><span style="left:74.60px;letter-spacing:0.15px">Video</span></div><div class="row" style="top:361px"><svg width="34" height="28" viewBox="0 0 34 28" style="left:30px;top:5px"><rect x=".2" y="4.500" width="31.700" height="20.300" fill="#b4dbf0"/><rect x="1.900" y="1" width="8" height="4.500" fill="#86cdf0"/><rect x="1.900" y="2.800" width="8" height="2.500" fill="#9bdcfb"/><rect x="10" y="3.200" width="20" height="2" fill="#c4e6f7"/><rect x="1.900" y="5" width="28.100" height="19.800" fill="url(#fg)"/><rect x="1.900" y="22.800" width="28.100" height="2" fill="#6ab9e2"/><rect x="1.900" y="25" width="28.100" height="1.500" fill="#e9e5e5"/></svg><span style="left:73.20px;letter-spacing:0.58px">Misc</span></div><div class="row" style="top:397px"><svg width="25" height="33" viewBox="0 0 25 33" style="left:33.300px;top:1.500px"><path d="M1 1h14l9 9v22H1z" fill="#fff" stroke="#c9c9c9" stroke-width="1.600"/><path d="M15 1v9h9" fill="#f4f4f4" stroke="#c9c9c9" stroke-width="1.300"/></svg><span style="left:74.00px;letter-spacing:0.50px">content.opf</span></div><div class="row" style="top:433px"><svg width="25" height="33" viewBox="0 0 25 33" style="left:33.300px;top:1.500px"><path d="M1 1h14l9 9v22H1z" fill="#fff" stroke="#c9c9c9" stroke-width="1.600"/><path d="M15 1v9h9" fill="#f4f4f4" stroke="#c9c9c9" stroke-width="1.300"/></svg><span style="left:75.00px;letter-spacing:0.39px">toc.ncx</span></div></div><div id="split"></div><div id="tabbar"><div class="abs" style="left:0;top:42px;width:812px;height:2px;background:#a3a3a3"></div><div class="tab" style="left:179.0px;width:166.0px;border-left:0"></div><div class="tab" style="left:347.0px;width:202.0px"></div><div class="tab" style="left:551.0px;width:259.8px"></div><div class="tab act" style="left:0;width:179px"></div><svg width="26" height="26" viewBox="0 0 26 26" style="left:23.0px;top:11.9px"><circle cx="13" cy="13" r="12.200" fill="#696969"/><path d="M6.800 6.800l12.400 12.400M19.200 6.800l-12.400 12.400" stroke="#d2d2d2" stroke-width="2.600"/></svg><svg width="24" height="32" viewBox="0 0 24 32" style="left:60.4px;top:7.2px"><path d="M1 1h15.500l6.500 6.500v23.500H1z" fill="#fff"/><rect x="11" y="13" width="11" height="6.500" fill="#f1f1f1"/><rect x="3.500" y="3.500" width="6" height="5.500" fill="#e3e3ea"/><path d="M6 6.500L9.500 4L16.400 3.200L16.600 10.500L13 13.500L9.500 17L6.200 18.800z" fill="#fbf3cb"/><path d="M15.600 5.500v5.500" stroke="#b9b18a" stroke-width="1.700"/><path d="M16.200 12.200L9 19" stroke="#b4b0a0" stroke-width="1.200"/><rect x="16.400" y="10.200" width="4.800" height="1.700" fill="#5a5638"/><rect x="15" y="12.300" width="6.800" height="1" fill="#b4b4b4"/><rect x="4" y="9.800" width="2" height="2" fill="#e8a898"/><rect x="4" y="13.600" width="2.200" height="2" fill="#f8c870"/><rect x="4" y="15.600" width="2.200" height="2" fill="#8b5a2b"/><rect x="4" y="17.600" width="2" height="1.800" fill="#9aa898"/><rect x="6" y="17.600" width="2" height="1.800" fill="#8cc070"/><rect x="2" y="22" width="20" height="6" fill="#0a12b0"/><path d="M16 1H1V31H23V8.300" fill="none" stroke="#484848" stroke-width="2"/><path d="M16.300 1.700L22.500 7.900" stroke="#484848" stroke-width="1.600" stroke-dasharray="1.300 1.300" opacity=".8"/></svg><span style="left:97.1px;top:9px;letter-spacing:1.1px">cov...</span><svg width="26" height="26" viewBox="0 0 26 26" style="left:202.8px;top:11.9px"><circle cx="13" cy="13" r="12.200" fill="#575757"/><path d="M6.800 6.800l12.400 12.400M19.200 6.800l-12.400 12.400" stroke="#d2d2d2" stroke-width="2.600"/></svg><svg width="24" height="32" viewBox="0 0 24 32" style="left:240.0px;top:7.0px"><path d="M1 1h15.500l6.500 6.500v23.500H1z" fill="#fff"/><rect x="11" y="13" width="11" height="6.500" fill="#f1f1f1"/><rect x="3.500" y="3.500" width="6" height="5.500" fill="#e3e3ea"/><path d="M6 6.500L9.500 4L16.400 3.200L16.600 10.500L13 13.500L9.500 17L6.200 18.800z" fill="#fbf3cb"/><path d="M15.600 5.500v5.500" stroke="#b9b18a" stroke-width="1.700"/><path d="M16.200 12.200L9 19" stroke="#b4b0a0" stroke-width="1.200"/><rect x="16.400" y="10.200" width="4.800" height="1.700" fill="#5a5638"/><rect x="15" y="12.300" width="6.800" height="1" fill="#b4b4b4"/><rect x="4" y="9.800" width="2" height="2" fill="#e8a898"/><rect x="4" y="13.600" width="2.200" height="2" fill="#f8c870"/><rect x="4" y="15.600" width="2.200" height="2" fill="#8b5a2b"/><rect x="4" y="17.600" width="2" height="1.800" fill="#9aa898"/><rect x="6" y="17.600" width="2" height="1.800" fill="#8cc070"/><rect x="2" y="22" width="20" height="6" fill="#0a12b0"/><path d="M16 1H1V31H23V8.300" fill="none" stroke="#3a3a3a" stroke-width="2"/><path d="M16.300 1.700L22.500 7.900" stroke="#3a3a3a" stroke-width="1.600" stroke-dasharray="1.300 1.300" opacity=".8"/></svg><span style="left:276.0px;top:9.5px;letter-spacing:0.5px">na...</span><svg width="26" height="26" viewBox="0 0 26 26" style="left:369.0px;top:11.9px"><circle cx="13" cy="13" r="12.200" fill="#575757"/><path d="M6.800 6.800l12.400 12.400M19.200 6.800l-12.400 12.400" stroke="#d2d2d2" stroke-width="2.600"/></svg><svg width="24" height="32" viewBox="0 0 24 32" style="left:406.6px;top:7.0px"><path d="M1 1h15.500l6.500 6.500v23.500H1z" fill="#fff"/><rect x="11" y="13" width="11" height="6.500" fill="#f1f1f1"/><rect x="3.500" y="3.500" width="6" height="5.500" fill="#e3e3ea"/><path d="M6 6.500L9.500 4L16.400 3.200L16.600 10.500L13 13.500L9.500 17L6.200 18.800z" fill="#fbf3cb"/><path d="M15.600 5.500v5.500" stroke="#b9b18a" stroke-width="1.700"/><path d="M16.200 12.200L9 19" stroke="#b4b0a0" stroke-width="1.200"/><rect x="16.400" y="10.200" width="4.800" height="1.700" fill="#5a5638"/><rect x="15" y="12.300" width="6.800" height="1" fill="#b4b4b4"/><rect x="4" y="9.800" width="2" height="2" fill="#e8a898"/><rect x="4" y="13.600" width="2.200" height="2" fill="#f8c870"/><rect x="4" y="15.600" width="2.200" height="2" fill="#8b5a2b"/><rect x="4" y="17.600" width="2" height="1.800" fill="#9aa898"/><rect x="6" y="17.600" width="2" height="1.800" fill="#8cc070"/><rect x="2" y="22" width="20" height="6" fill="#0a12b0"/><path d="M16 1H1V31H23V8.300" fill="none" stroke="#3a3a3a" stroke-width="2"/><path d="M16.300 1.700L22.500 7.900" stroke="#3a3a3a" stroke-width="1.600" stroke-dasharray="1.300 1.300" opacity=".8"/></svg><span style="left:446.0px;top:9.5px;letter-spacing:0.57px">Prefa...</span><svg width="26" height="26" viewBox="0 0 26 26" style="left:572.9px;top:11.9px"><circle cx="13" cy="13" r="12.200" fill="#575757"/><path d="M6.800 6.800l12.400 12.400M19.200 6.800l-12.400 12.400" stroke="#d2d2d2" stroke-width="2.600"/></svg><svg width="24" height="32" viewBox="0 0 24 32" style="left:610.4px;top:7.0px"><path d="M1 1h15.500l6.500 6.500v23.500H1z" fill="#fff"/><rect x="11" y="13" width="11" height="6.500" fill="#f1f1f1"/><rect x="3.500" y="3.500" width="6" height="5.500" fill="#e3e3ea"/><path d="M6 6.500L9.500 4L16.400 3.200L16.600 10.500L13 13.500L9.500 17L6.200 18.800z" fill="#fbf3cb"/><path d="M15.600 5.500v5.500" stroke="#b9b18a" stroke-width="1.700"/><path d="M16.200 12.200L9 19" stroke="#b4b0a0" stroke-width="1.200"/><rect x="16.400" y="10.200" width="4.800" height="1.700" fill="#5a5638"/><rect x="15" y="12.300" width="6.800" height="1" fill="#b4b4b4"/><rect x="4" y="9.800" width="2" height="2" fill="#e8a898"/><rect x="4" y="13.600" width="2.200" height="2" fill="#f8c870"/><rect x="4" y="15.600" width="2.200" height="2" fill="#8b5a2b"/><rect x="4" y="17.600" width="2" height="1.800" fill="#9aa898"/><rect x="6" y="17.600" width="2" height="1.800" fill="#8cc070"/><rect x="2" y="22" width="20" height="6" fill="#0a12b0"/><path d="M16 1H1V31H23V8.300" fill="none" stroke="#3a3a3a" stroke-width="2"/><path d="M16.300 1.700L22.500 7.900" stroke="#3a3a3a" stroke-width="1.600" stroke-dasharray="1.300 1.300" opacity=".8"/></svg><span style="left:648.8px;top:9.5px;letter-spacing:0.55px">AddingPoin...</span></div><div id="content"><div id="cover"></div><svg class="abs" style="left:0;top:0" width="780" height="758" viewBox="414 192 780 758"><defs><linearGradient id="bx" x1="0" y1="0" x2="1" y2="1"><stop offset="0" stop-color="#bfe9fa"/><stop offset=".5" stop-color="#98bdf4"/><stop offset="1" stop-color="#6f8ae6"/></linearGradient></defs><text transform="translate(631 311.5) skewX(-7) scale(1.09 1)" font-family="DejaVu Sans,Liberation Sans,sans-serif" font-size="48" stroke="#000" stroke-width="0.7" stroke-linejoin="round"><tspan x="0" textLength="196.3" lengthAdjust="spacing">Playing</tspan> <tspan x="211.9" textLength="97.2" lengthAdjust="spacing">with</tspan></text><text transform="translate(594 396) skewX(-7) scale(1.18 1)" font-family="DejaVu Sans,Liberation Sans,sans-serif" font-size="64" textLength="350.8" lengthAdjust="spacing" stroke="#000" stroke-width="1.3" stroke-linejoin="round">Geometric</text><text transform="translate(635.5 480.5) skewX(-7) scale(1.42 1)" font-family="DejaVu Sans,Liberation Sans,sans-serif" font-size="72" stroke="#000" stroke-width="1.2" stroke-linejoin="round">A</text><text transform="translate(702.5 480.5) skewX(-7) scale(1.12 1)" font-family="DejaVu Sans,Liberation Sans,sans-serif" font-size="72" textLength="235.7" lengthAdjust="spacing" stroke="#000" stroke-width="1.4" stroke-linejoin="round">lgebra</text><text x="699.2" y="565.8" font-family="Liberation Serif,serif" font-style="italic" font-size="45" textLength="208" lengthAdjust="spacing">Stalking an</text><text x="632.9" y="603.3" font-family="Liberation Serif,serif" font-style="italic" font-size="45" textLength="338.5" lengthAdjust="spacing">eloquent language</text><rect x="597.6" y="623.8" width="412.800" height="235.100" rx="23" fill="url(#bx)" stroke="#3355cc" stroke-width="6.600"/><path d="M704.0 701.2L636.3 679.5" stroke="#000" stroke-width="2.2" stroke-dasharray="4.5 3.5" fill="none"/><path d="M627.7 676.8L637.5 675.7L635.1 683.4z" fill="#000"/><path d="M704 696.400l4.800 4.800-4.800 4.800-4.800-4.800z" fill="#000"/><circle cx="774.6" cy="663" r="3.6" fill="#000"/><path d="M774.6 663.0L842.0 683.7" stroke="#000" stroke-width="2.2" fill="none"/><path d="M850.6 686.3L840.8 687.5L843.2 679.8z" fill="#000"/><path d="M850.6 686.3L819.0 717.8" stroke="#000" stroke-width="2.2" stroke-dasharray="4.5 3.5" fill="none"/><circle cx="819" cy="717.8" r="3.6" fill="#000"/><path d="M819.0 717.8L751.6 695.8" stroke="#000" stroke-width="2.2" fill="none"/><path d="M743.0 693.0L752.8 692.0L750.3 699.6z" fill="#000"/><path d="M868.7 703.500L898 675L974.200 699L945 727.700z" fill="#ababab"/><path d="M873.500 669.700L904 640.500L978.400 665.300L948.800 693.400z" fill="#c2c2c2"/><path d="M873.5 669.7L948.8 693.4" stroke="#000" stroke-width="2.2" fill="none"/><path d="M948.8 693.4L971.9 671.5" stroke="#000" stroke-width="2.2" fill="none"/><path d="M978.4 665.3L974.6 674.4L969.1 668.6z" fill="#000"/><circle cx="873.5" cy="669.7" r="3.6" fill="#000"/><path d="M974.2 699.0L977.8 672.0" stroke="#000" stroke-width="2.2" stroke-dasharray="4.5 3.5" fill="none"/><path d="M974.2 699.0L945.0 727.7" stroke="#000" stroke-width="2.2" fill="none"/><path d="M945.0 727.7L877.3 706.2" stroke="#000" stroke-width="2.2" fill="none"/><path d="M868.7 703.5L878.5 702.4L876.1 710.0z" fill="#000"/><circle cx="974.2" cy="699" r="3.6" fill="#000"/><circle cx="703.4" cy="808.2" r="3.6" fill="#000"/><path d="M703.4 808.2L635.3 786.2" stroke="#000" stroke-width="2.2" fill="none"/><path d="M626.7 783.4L636.5 782.4L634.0 790.0z" fill="#000"/><path d="M742 799.600L772.700 770.600L848.300 794.800L819 823.400z" fill="#c2c2c2"/><path d="M848.3 794.8L819.0 823.4" stroke="#000" stroke-width="2.2" fill="none"/><path d="M819.0 823.4L750.6 802.3" stroke="#000" stroke-width="2.2" fill="none"/><path d="M742.0 799.6L751.8 798.4L749.4 806.1z" fill="#000"/><circle cx="848.3" cy="794.8" r="3.6" fill="#000"/><path d="M869.700 788L900 758.600L977 782.800L946 812z" fill="#c6c6c6"/><path d="M869.700 788L946 812L942 846.300L865.800 821.500z" fill="#bababa"/><path d="M946 812L977 782.800L972.700 814.900L942 846.300z" fill="#9a9a9a"/><path d="M977.0 782.8L972.7 814.9" stroke="#000" stroke-width="2.2" fill="none"/><path d="M972.7 814.9L942.0 846.3" stroke="#000" stroke-width="2.2" fill="none"/><path d="M942.0 846.3L874.4 824.3" stroke="#000" stroke-width="2.2" fill="none"/><path d="M865.8 821.5L875.6 820.5L873.1 828.1z" fill="#000"/><circle cx="977" cy="782.8" r="3.6" fill="#000"/><text transform="translate(763.8 654.8) skewX(-4) scale(1.0 1)" font-family="Liberation Sans,sans-serif" font-size="28" textLength="80.0" lengthAdjust="spacing" stroke="#000" stroke-width=".5">Free</text><text transform="translate(616.2 752) skewX(-4) scale(1.0 1)" font-family="Liberation Sans,sans-serif" font-size="30.5" textLength="88.0" lengthAdjust="spacing" stroke="#000" stroke-width=".5">vector</text><text transform="translate(729.2 752) skewX(-4) scale(1.0 1)" font-family="Liberation Sans,sans-serif" font-size="30.5" textLength="112.5" lengthAdjust="spacing" stroke="#000" stroke-width=".5">bivector</text><text transform="translate(867.4 752) skewX(-4) scale(1.04 1)" font-family="Liberation Sans,sans-serif" font-size="30.5" textLength="118.3" lengthAdjust="spacing" stroke="#000" stroke-width=".5">trivector</text><text transform="translate(742.8 850) skewX(-4) scale(1.0 1)" font-family="Liberation Sans,sans-serif" font-size="27" textLength="117.0" lengthAdjust="spacing" stroke="#000" stroke-width=".5">Bound</text><text x="708.5" y="899.800" font-family="Liberation Serif,serif" font-size="38" textLength="191" lengthAdjust="spacing">Gary Harper</text></svg><div id="vsb"><i></i></div></div><div id="status"><div class="z">170%</div><div class="zb" style="left:770px"><svg class="abs" style="left:11px;top:19.500px" width="26" height="11" viewBox="0 0 26 11"><rect x="2" y="2" width="22" height="6" fill="#a9c4e6" stroke="#2f5fa8" stroke-width="2"/></svg></div><svg class="abs" style="left:830px;top:8px" width="290" height="56" viewBox="0 0 290 56"><rect x="6.400" y="18.500" width="275.500" height="6.500" rx="3.200" fill="#b2b2b2"/><rect x="20" y="40" width="2" height="8.500" fill="#868686"/><rect x="143" y="40" width="2" height="8.500" fill="#868686"/><rect x="266" y="40" width="2" height="8.500" fill="#868686"/><path d="M149.500 12q0-4 4-4h23q4 0 4 4v14.500l-15.500 16-15.500-16z" fill="#fff" stroke="#c4c4c4" stroke-width="1"/></svg><div class="zb" style="left:1126px"><svg class="abs" style="left:10px;top:10px" width="28" height="28" viewBox="0 0 28 28"><path d="M11 3h6v8h8v6h-8v8h-6v-8h-8v-6h8z" fill="#a9c4e6" stroke="#2f5fa8" stroke-width="2"/></svg></div></div>
</div>
</body>
</html>
